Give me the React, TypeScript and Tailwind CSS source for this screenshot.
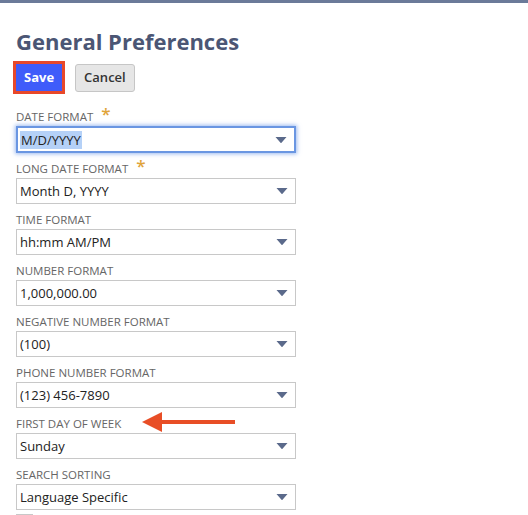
const fields: { label: string; value: string; required?: boolean; focused?: boolean }[] = [
  { label: "Date Format", value: "M/D/YYYY", required: true, focused: true },
  { label: "Long Date Format", value: "Month D, YYYY", required: true },
  { label: "Time Format", value: "hh:mm AM/PM" },
  { label: "Number Format", value: "1,000,000.00" },
  { label: "Negative Number Format", value: "(100)" },
  { label: "Phone Number Format", value: "(123) 456-7890" },
  { label: "First Day of Week", value: "Sunday" },
  { label: "Search Sorting", value: "Language Specific" },
];

const Caret = () => (
  <svg width="12" height="7" viewBox="0 0 12 7" className="absolute right-[7px] top-1/2 -translate-y-1/2">
    <path d="M0.5 0.5 H11.5 L6.5 6.2 Q6 6.8 5.5 6.2 Z" fill="#5b6a8b" />
  </svg>
);

const Arrow = () => (
  <svg width="96" height="22" viewBox="0 0 96 22" className="absolute left-[125px] top-[-3px]">
    <path d="M1 11 L21 1 L21 21 Z" fill="#e84e26" />
    <rect x="18" y="9" width="76" height="4" fill="#e84e26" />
  </svg>
);

const App = () => {
  return (
    <div className="w-[528px] h-[515px] overflow-hidden bg-white font-['Open_Sans',sans-serif]">
      <div className="h-[3px] bg-[#6b7a99]" />
      <div className="px-4">
        <h1 className="mt-[23px] text-[22px] leading-[30px] font-bold text-[#4b5674]">General Preferences</h1>
        <div className="flex items-center gap-[10px] mt-[5px] -ml-[3px]">
          <div className="border-[3px] border-[#e8482a]">
            <button className="h-[27px] px-[8px] bg-[#3f5cfa] text-white text-[13px] font-bold">Save</button>
          </div>
          <button className="h-[28px] px-[8px] bg-[#e6e6e6] border border-[#c6c6c6] rounded-[3px] text-[13px] font-semibold text-[#333]">
            Cancel
          </button>
        </div>
        <div className="mt-[13px] flex flex-col">
          {fields.map((f) => (
            <div key={f.label} className="mb-[6px]">
              <div className="relative h-[18px] flex items-center text-[11.5px] uppercase text-[#666]">
                {f.label}
                {f.required && <span className="ml-[8px] text-[#e0a43a] text-[17px] font-semibold leading-none relative top-[-3px]">*</span>}
                {f.label === "First Day of Week" && <Arrow />}
              </div>
              <div
                className={
                  f.focused
                    ? "relative mt-[1px] w-[280px] h-[27px] border-2 border-[#6a96e2] shadow-[0_0_4px_1px_rgba(90,140,230,0.6)] flex items-center pl-[2px]"
                    : "relative mt-[1px] w-[280px] h-[26px] border border-[#c8c8c8] flex items-center pl-[3px]"
                }
              >
                <span
                  className={
                    f.focused
                      ? "text-[13px] text-[#222] bg-[#b5d1f7] px-[1px] leading-[18px]"
                      : "text-[13px] text-[#222] leading-[18px]"
                  }
                >
                  {f.value}
                </span>
                <Caret />
              </div>
            </div>
          ))}
          <div className="w-[17px] h-[17px] border border-[#c8c8c8] -mt-[2px]" />
        </div>
      </div>
    </div>
  );
};

export default App;
